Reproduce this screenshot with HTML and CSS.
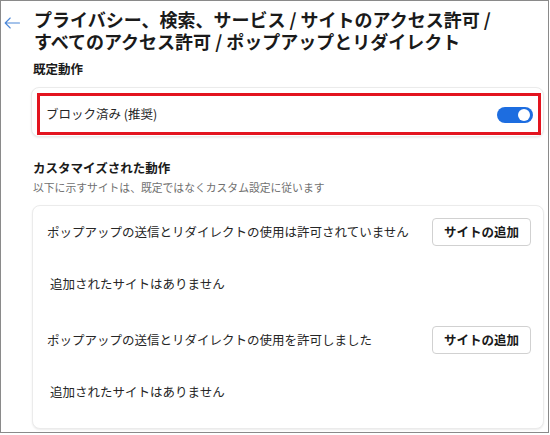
FILE: index.html
```html
<!DOCTYPE html>
<html lang="ja">
<head>
<meta charset="utf-8">
<title>ポップアップとリダイレクト</title>
<link rel="stylesheet" href="styles.css">
</head>
<body>
<div class="frame">
  <div class="nav">
    <svg class="back" width="16" height="12" viewBox="0 0 16 12" aria-hidden="true">
      <path d="M15.5 6H1.2M6.2 1L1.2 6l5 5" fill="none" stroke="#4d88d8" stroke-width="1.1" stroke-linecap="round" stroke-linejoin="round"/>
    </svg>
  </div>
  <main class="main">
    <h1 class="title"><span class="title-line">プライバシー、検索、サービス / サイトのアクセス許可 /</span><span class="title-line">すべてのアクセス許可 / ポップアップとリダイレクト</span></h1>

    <h2 class="section-label">既定動作</h2>
    <div class="card card-default">
      <div class="highlight">
        <span class="row-text">ブロック済み (推奨)</span>
        <span class="toggle"><span class="knob"></span></span>
      </div>
    </div>

    <h2 class="section-label section-custom">カスタマイズされた動作</h2>
    <p class="section-sub">以下に示すサイトは、既定ではなくカスタム設定に従います</p>
    <div class="card card-list">
      <div class="list-row">
        <span class="row-text">ポップアップの送信とリダイレクトの使用は許可されていません</span>
        <button class="add-btn">サイトの追加</button>
      </div>
      <div class="empty">追加されたサイトはありません</div>
      <div class="list-row list-row-second">
        <span class="row-text">ポップアップの送信とリダイレクトの使用を許可しました</span>
        <button class="add-btn">サイトの追加</button>
      </div>
      <div class="empty">追加されたサイトはありません</div>
    </div>
  </main>
</div>
</body>
</html>
```

FILE: styles.css
```css
* { box-sizing: border-box; }
html, body { margin: 0; padding: 0; background: #fff; }
body {
  font-family: "Noto Sans CJK JP", "Noto Sans", sans-serif;
  color: #262626;
}
.frame {
  width: 549px;
  height: 433px;
  border: 1px solid #8a8a8a;
  display: flex;
  overflow: hidden;
}
.nav {
  width: 30px;
  flex: none;
  padding-left: 3px;
  padding-top: 16px;
}
.back { display: block; }
.main {
  flex: 1;
  padding-right: 4px;
  min-width: 0;
}
.title {
  margin: 7px 0 0 3px;
  font-size: 18px;
  font-weight: 700;
  color: #1a1a1a;
  white-space: nowrap;
}
.title-line {
  display: block;
  height: 22px;
  line-height: 22px;
}
.section-label {
  margin: 8px 0 0 2px;
  font-size: 12.5px;
  line-height: 18px;
  font-weight: 700;
  color: #1a1a1a;
}
.section-custom { margin-top: 22px; }
.section-sub {
  margin: 2px 0 0 2px;
  font-size: 10.8px;
  line-height: 16px;
  color: #707070;
}
.card {
  background: #fff;
  border: 1px solid #ebebeb;
  border-radius: 8px;
  box-shadow: 0 1px 2px rgba(0,0,0,0.08);
}
.card-default {
  margin-top: 9px;
  height: 50px;
  padding: 5px 2px 1px 5px;
}
.highlight {
  height: 42px;
  border: 3px solid #e3141f;
  display: flex;
  align-items: center;
  justify-content: space-between;
  padding: 0 5px 0 6px;
}
.row-text {
  font-size: 12.5px;
  line-height: 18px;
  color: #262626;
  white-space: nowrap;
}
.toggle {
  width: 36px;
  height: 16px;
  border-radius: 8px;
  background: #1d6de0;
  position: relative;
  margin-top: 2px;
}
.knob {
  position: absolute;
  right: 3px;
  top: 2px;
  width: 12px;
  height: 12px;
  border-radius: 50%;
  background: #fff;
}
.card-list {
  margin-top: 10px;
  margin-left: 1px;
  height: 224px;
  padding: 0 12px 0 14px;
}
.list-row {
  height: 51px;
  display: flex;
  align-items: center;
  justify-content: space-between;
}
.list-row-second { margin-top: 5px; }
.add-btn {
  font-family: inherit;
  font-size: 12.5px;
  font-weight: 700;
  color: #1a1a1a;
  background: #fff;
  border: 1px solid #d1d1d1;
  border-radius: 4px;
  width: 99px;
  height: 28px;
  padding: 0;
  line-height: 26px;
}
.empty {
  height: 52px;
  display: flex;
  align-items: center;
  padding-left: 3px;
  font-size: 12.5px;
  color: #262626;
}
```
